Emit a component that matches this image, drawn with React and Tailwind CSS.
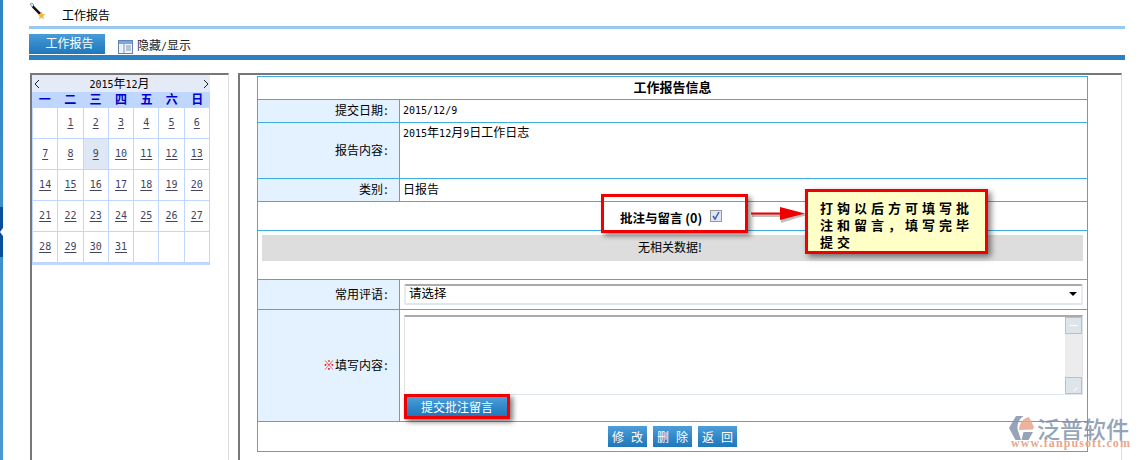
const cjk = '"Noto Sans CJK SC", sans-serif';
const days = ['', '1', '2', '3', '4', '5', '6', '7', '8', '9', '10', '11', '12', '13', '14', '15', '16', '17', '18', '19', '20', '21', '22', '23', '24', '25', '26', '27', '28', '29', '30', '31', '', '', ''];

function Num({ children }) {
  return <span className="font-['DejaVu_Sans_Mono'] text-[10px]">{children}</span>;
}

function Calendar() {
  return (
    <div className="w-[178px] border-b-2 border-[#bfd6ff]">
      <div className="flex h-[17px] items-center justify-between bg-[#e4ebf6] pl-[2px] pr-[1px] text-[12px] leading-[17px] text-black">
        <svg width="6" height="10" viewBox="0 0 6 10"><path d="M5 1 1 5l4 4" fill="none" stroke="#222" strokeWidth="1" /></svg>
        <span className="-ml-[4px]"><Num>2015</Num>年<Num>12</Num>月</span>
        <svg width="6" height="10" viewBox="0 0 6 10"><path d="m1 1 4 4-4 4" fill="none" stroke="#222" strokeWidth="1" /></svg>
      </div>
      <div className="grid h-[15px] grid-cols-7 items-center bg-[#bfd6ff] pb-[2px] text-center text-[12px] font-bold leading-[13px] text-[#0000c8]">
        {['一', '二', '三', '四', '五', '六', '日'].map((d) => <span key={d}>{d}</span>)}
      </div>
      <div className="grid grid-cols-7 border-l border-t border-[#bfd6ff]">
        {days.map((d, i) => (
          <div key={i} className={`flex h-[31px] items-center justify-center border-r border-b border-[#bfd6ff] pb-[2px] font-['DejaVu_Sans_Mono'] text-[10px] text-[#44445f] underline underline-offset-2 ${d === '9' ? 'bg-[#dfe7f5]' : ''}`}>
            {d}
          </div>
        ))}
      </div>
    </div>
  );
}

function Colon() {
  return <span className="inline-block w-[6px] text-center">:</span>;
}

function Label({ children }) {
  return <div className="flex w-[142px] shrink-0 items-center justify-end border-r border-[#3eaee0] bg-[#e4f2ff] pb-[2px] pr-[10px] text-[12px] text-black">{children}<Colon /></div>;
}

function Blue({ children, className }) {
  return <button className={`whitespace-nowrap bg-gradient-to-b from-[#4d9fd8] via-[#3389c9] to-[#1f78bb] text-[12px] text-white ${className}`}>{children}</button>;
}

function Logo() {
  return (
    <div className="absolute left-[1009px] top-[416px] flex h-[35px] w-[125px] flex-col">
      <div className="flex h-[24px] items-center">
        <svg width="26" height="24" viewBox="0 0 26 24" className="shrink-0 opacity-85">
          <path d="M7 0h7.500C10 3 8 8 8.500 13L12 24H6.500L0 12z" fill="#8494ac" />
          <path d="M10 14C10 7 15 1.500 20 1l5 10-1 2.500z" fill="#e8a78d" />
          <path d="M12.500 24l2-8H24l-4.500 8z" fill="#8494ac" />
        </svg>
        <span className="ml-[2px] whitespace-nowrap text-[23px] font-medium leading-[24px] text-[#8494ac] opacity-85">泛普软件</span>
      </div>
      <span className="-mt-[2px] ml-[2px] whitespace-nowrap font-['Liberation_Serif'] text-[12px] font-bold leading-[10px] tracking-[1.1px] text-[#e8a78d]">www.fanpusoft.com</span>
    </div>
  );
}

export default function App() {
  return (
    <div className="relative flex h-[460px] w-[1139px] overflow-hidden bg-white text-[12px] text-black" style={{ fontFamily: cjk }}>
      <div className="relative w-[3px] shrink-0 bg-gradient-to-b from-[#2f86c6] to-[#4a98d4]">
        <div className="mt-[207px] flex h-[50px] items-center bg-[#0a4f9e]">
          <div className="h-0 w-0 border-y-[4px] border-r-[3px] border-y-transparent border-r-white" />
        </div>
      </div>

      <div className="ml-[26px] flex w-[1096px] shrink-0 flex-col">
        <div className="flex h-[26px] shrink-0 items-start">
          <svg width="17" height="18" viewBox="0 0 17 18" className="mt-[2px] shrink-0">
            <path d="M1 2 3 1l2 2-2 2z" fill="#dfe7ee" stroke="#6f8fa8" strokeWidth="0.8" />
            <path d="M4.500 3.500 12 11l-1.800 1.800L3 5.500z" fill="#111" />
            <path d="m12.500 9 1 3 3 .3-2.300 2 .8 3-2.500-1.600-2.700 1.600.9-3-2.200-2 3-.3z" fill="#f5b942" />
          </svg>
          <span className="ml-[16px] mt-[7px] text-[12px] leading-[16px]">工作报告</span>
        </div>
        <div className="h-[3px] shrink-0 bg-[#99c9ee]" />
        <div className="mt-[5px] flex h-[20px] shrink-0 items-end">
          <div className="flex h-[20px] w-[76px] items-center justify-center bg-gradient-to-b from-[#4a9cd8] via-[#3288c8] to-[#1f78bb] pb-[2px] pl-[5px] text-[12px] text-white">工作报告</div>
          <svg width="16" height="14" viewBox="0 0 16 14" className="ml-[13px] shrink-0">
            <rect x="0.5" y="0.5" width="14" height="13" fill="#eef3fa" stroke="#5f84b5" />
            <rect x="1" y="1" width="13" height="3" fill="#7fa6d6" />
            <path d="M6 4v9M8 6h5M8 8h5M8 10h5" stroke="#7f98b8" />
          </svg>
          <span className="ml-[3px] text-[12px] leading-[14px] text-[#222]">隐藏<Num>/</Num>显示</span>
        </div>
        <div className="mt-[1px] h-[5px] shrink-0 bg-[#2a80c0]" />

        <div className="mt-[13px] flex min-h-0 flex-1">
          <div className="ml-[1px] w-[199px] shrink-0 border-l-2 border-t-2 border-r border-l-[#777] border-t-[#777] border-r-[#ddd]">
            <Calendar />
          </div>
          <div className="ml-[9px] w-[884px] shrink-0 border-l-2 border-t-2 border-r border-l-[#777] border-t-[#777] border-r-[#ddd] pl-[17px] pt-[1px]">
            <div className="w-[831px] border border-[#3eaee0]">
              <div className="flex h-[23px] items-center justify-center border-b border-[#3eaee0] pb-[2px] text-[13px] font-bold">工作报告信息</div>
              <div className="flex h-[23px] border-b border-[#3eaee0]">
                <Label>提交日期</Label>
                <div className="flex items-center pb-[2px] pl-[3px]"><Num>2015/12/9</Num></div>
              </div>
              <div className="flex h-[56px] border-b border-[#3eaee0]">
                <Label>报告内容</Label>
                <div className="pl-[3px] text-[12px] leading-[18px]"><Num>2015</Num>年<Num>12</Num>月<Num>9</Num>日工作日志</div>
              </div>
              <div className="flex h-[23px] border-b border-[#3eaee0]">
                <Label>类别</Label>
                <div className="flex items-center pb-[2px] pl-[3px] text-[12px]">日报告</div>
              </div>
              <div className="flex h-[29px] items-center border-b border-[#3eaee0]">
                <span className="ml-[362px] mt-[4px] text-[12.5px] font-bold leading-[24px]">批注与留言 (0)</span>
                <span className="ml-[8px] flex h-[12px] w-[12px] items-center justify-center border border-[#999] bg-[#dfe6f3]">
                  <svg width="10" height="10" viewBox="0 0 10 10"><path d="m2 5 2 3 4-7" fill="none" stroke="#3a5fb0" strokeWidth="1.5" /></svg>
                </span>
              </div>
              <div className="h-[49px] border-b border-[#3eaee0] pl-[4px] pt-[4px]">
                <div className="flex h-[26px] w-[821px] items-center justify-center bg-[#dddddd] pb-[2px] pr-[5px] text-[12px]">无相关数据!</div>
              </div>
              <div className="flex h-[30px] border-b border-[#3eaee0]">
                <Label>常用评语</Label>
                <div className="pl-[4px] pt-[4px]">
                  <div className="flex h-[21px] w-[679px] items-center justify-between rounded-[2px] border-2 border-t-[#aaa] border-x-[#e6ebf2] border-b-[#e0e6ee] pl-[3px] pr-[4px]">
                    <span className="-mt-[3px] text-[12.5px] leading-[16px]">请选择</span>
                    <div className="-mt-[1px] h-0 w-0 border-x-[4px] border-t-[4px] border-x-transparent border-t-black" />
                  </div>
                </div>
              </div>
              <div className="flex h-[112px] border-b border-[#3eaee0]">
                <Label><span className="font-bold text-[#f00000]">※</span>填写内容</Label>
                <div className="pl-[4px] pt-[5px]">
                  <div className="flex h-[80px] w-[679px] justify-end border-x border-b border-t-2 border-x-[#e0e4ea] border-b-[#e0e6ee] border-t-[#aaa]">
                    <div className="flex w-[17px] flex-col justify-between bg-[#ececec]">
                      <div className="flex h-[17px] items-center justify-center border border-[#b5c2cc] bg-[#dde4ea]"><div className="h-[1px] w-[7px] bg-white" /></div>
                      <div className="flex h-[17px] items-end justify-end border border-[#b5c2cc] bg-[#dde4ea] p-[3px]"><div className="h-[1px] w-[5px] -rotate-45 bg-white" /></div>
                    </div>
                  </div>
                  <Blue className="-mt-[1px] block h-[25px] w-[106px] border-[3px] border-[#f00000] leading-[18px] shadow-[3px_3px_5px_rgba(0,0,0,0.5)]">提交批注留言</Blue>
                </div>
              </div>
              <div className="flex h-[29px] items-center justify-center gap-[6px]">
                <Blue className="h-[21px] w-[39px] pl-[4px] text-left tracking-[7px]">修改</Blue>
                <Blue className="h-[21px] w-[39px] pl-[4px] text-left tracking-[7px]">删除</Blue>
                <Blue className="h-[21px] w-[39px] pl-[4px] text-left tracking-[7px]">返回</Blue>
              </div>
            </div>
          </div>
        </div>
      </div>

      <div className="absolute left-[601px] top-[194px] h-[39px] w-[147px] border-[3px] border-[#f00000] shadow-[3px_3px_5px_rgba(0,0,0,0.45)]" />
      <svg width="58" height="22" viewBox="0 0 58 22" className="absolute left-[750px] top-[203px]">
        <path d="M1 10h29V4l26 7-26 8v-6H1z" fill="#000" opacity="0.25" transform="translate(1 1)" />
        <path d="M1 9.500h29V4l25 6.500-25 6.500v-5.500H1z" fill="#ee0000" />
      </svg>
      <div className="absolute left-[805px] top-[189px] h-[65px] w-[183px] border-[3px] border-[#f00000] bg-[#ffffc8] pl-[12px] pt-[7px] text-[13px] font-bold leading-[17px] tracking-[4px] shadow-[3px_3px_6px_rgba(0,0,0,0.5)]">
        打钩以后方可填写批<br />{'注和留言\uFF0C填写完毕'}<br />提交
      </div>
      <Logo />
    </div>
  );
}
